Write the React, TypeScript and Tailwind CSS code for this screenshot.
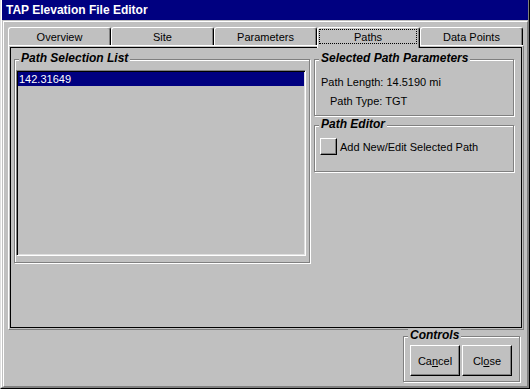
import React from "react";

function Tab({ label, selected }: { label: string; selected?: boolean }) {
  if (selected) {
    return (
      <div className="relative z-10 w-[103px] h-[21px] -mb-[3px] bg-[#c0c0c0] border-t border-l border-t-white border-l-white border-r border-r-black rounded-tl-[3px] rounded-tr-[3px] shadow-[inset_-1px_0_0_#808080] pt-px pl-px pr-[2px]">
        <div className="h-[15px] border border-dotted border-black flex items-center justify-center">
          {label}
        </div>
      </div>
    );
  }
  return (
    <div className="w-[103px] h-[18px] border-t border-l border-t-white border-l-white border-r border-r-black rounded-tl-[3px] rounded-tr-[3px] shadow-[inset_-1px_0_0_#808080] flex items-center justify-center">
      {label}
    </div>
  );
}

function Group({
  label,
  className,
  children,
}: {
  label: string;
  className: string;
  children?: React.ReactNode;
}) {
  return (
    <div
      className={
        "relative border border-[#808080] shadow-[inset_1px_1px_0_#fff,1px_1px_0_#fff] " +
        className
      }
    >
      <span className="absolute -top-[9px] left-[4px] px-[2px] bg-[#c0c0c0] font-bold italic text-[12px] leading-[15px] whitespace-nowrap">
        {label}
      </span>
      {children}
    </div>
  );
}

function Button({ children, className }: { children?: React.ReactNode; className: string }) {
  return (
    <div
      className={
        "border border-t-white border-l-white border-r-black border-b-black shadow-[inset_-1px_-1px_0_#808080] flex items-center justify-center " +
        className
      }
    >
      {children}
    </div>
  );
}

export default function App() {
  return (
    <div className="w-[530px] h-[389px] bg-[#c0c0c0] text-black text-[11px] leading-[14px] font-['Liberation_Sans',Arial,sans-serif] border-l border-l-[#dfdfdf] border-r border-r-black border-b border-b-black overflow-hidden">
      <div className="h-full flex flex-col border-l border-l-white border-r border-r-[#808080] border-b border-b-[#808080]">
        {/* Title bar */}
        <div className="h-[20px] shrink-0 bg-[#000080] text-white font-bold text-[12px] leading-[20px] pl-[4px]">
          TAP Elevation File Editor
        </div>
        {/* Client */}
        <div className="flex-1 flex flex-col mt-px ml-px border-l border-t border-l-white border-t-white border-r border-r-[#808080] border-b border-b-[#808080] pl-[4px] pt-[5px]">
          {/* Tabs */}
          <div className="flex items-start">
            <Tab label="Overview" />
            <Tab label="Site" />
            <Tab label="Parameters" />
            <Tab label="Paths" selected />
            <Tab label="Data Points" />
          </div>
          {/* Panel */}
          <div className="w-[516px] h-[285px] border-t border-l border-t-white border-l-white border-r border-b border-r-[#808080] border-b-[#808080] p-px">
            <div className="h-full border border-black flex gap-[4px] pl-[3px] pt-[11px]">
              <Group label="Path Selection List" className="w-[296px] h-[204px]">
                <div className="mt-[10px] ml-[1px] w-[290px] h-[186px] border border-t-[#808080] border-l-[#808080] border-r-white border-b-white shadow-[inset_1px_1px_0_#000,inset_-1px_-1px_0_#dfdfdf] p-px">
                  <div className="h-[14px] bg-[#000080] text-white pl-px leading-[14px]">
                    142.31649
                  </div>
                </div>
              </Group>
              <div className="flex flex-col gap-[9px]">
                <Group label="Selected Path Parameters" className="w-[200px] h-[57px]">
                  <div className="pl-[6px] pt-[15px]">Path Length: 14.5190 mi</div>
                  <div className="pl-[15px] pt-[5px]">Path Type: TGT</div>
                </Group>
                <Group label="Path Editor" className="w-[200px] h-[47px]">
                  <div className="flex items-center pl-[5px] pt-[12px] gap-[3px]">
                    <Button className="w-[17px] h-[17px]" />
                    <span>Add New/Edit Selected Path</span>
                  </div>
                </Group>
              </div>
            </div>
          </div>
          {/* Bottom controls */}
          <div className="flex justify-end pr-[7px] pt-[6px]">
            <Group label="Controls" className="w-[117px] h-[46px]">
              <div className="flex gap-[2px] pl-[6px] pt-[8px]">
                <Button className="w-[50px] h-[31px]">
                  <span>
                    Ca<span className="underline">n</span>cel
                  </span>
                </Button>
                <Button className="w-[50px] h-[31px]">
                  <span>
                    Cl<span className="underline">o</span>se
                  </span>
                </Button>
              </div>
            </Group>
          </div>
        </div>
      </div>
    </div>
  );
}
